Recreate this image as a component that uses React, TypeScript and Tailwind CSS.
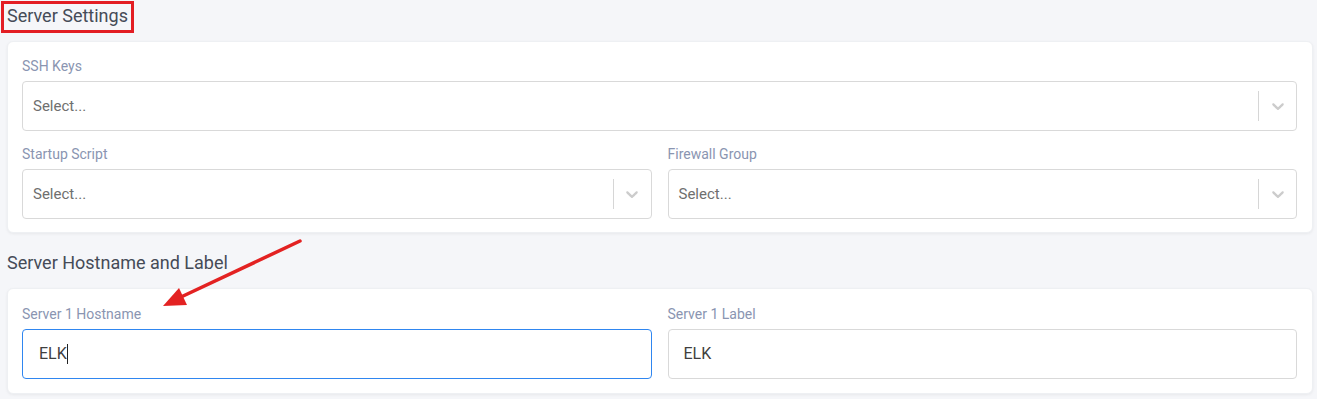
import React from 'react';

const Chevron = () => (
  <svg width="20" height="20" viewBox="0 0 20 20" className="fill-[#cccccc]">
    <path d="M4.516 7.548c0.436-0.446 1.043-0.481 1.576 0l3.908 3.747 3.908-3.747c0.533-0.481 1.141-0.446 1.574 0 0.436 0.445 0.408 1.197 0 1.615-0.406 0.418-4.695 4.502-4.695 4.502-0.217 0.223-0.502 0.335-0.787 0.335s-0.57-0.112-0.789-0.335c0 0-4.287-4.084-4.695-4.502s-0.436-1.17 0-1.615z" />
  </svg>
);

const Field = ({ label, children }: { label: string; children: React.ReactNode }) => (
  <div>
    <div className="text-[14px] leading-[16px] text-[#8a95b1] mb-[7px]">{label}</div>
    {children}
  </div>
);

const SelectBox = () => (
  <div className="h-[50px] flex items-center border border-[#d9d9d9] rounded-[4px] bg-white">
    <div className="flex-1 pl-[10px] text-[15px] text-[#6f6f6f]">Select...</div>
    <div className="w-px h-[30px] bg-[#d6d6d6]" />
    <div className="w-[37px] flex items-center justify-center">
      <Chevron />
    </div>
  </div>
);

const TextBox = ({ value, focused }: { value: string; focused?: boolean }) => (
  <div
    className={`h-[50px] flex items-center rounded-[4px] bg-white px-[15px] text-[16px] text-[#3f3f3f] ${
      focused ? 'border border-[#2f86f0]' : 'border border-[#d9d9d9]'
    }`}
  >
    <span className={focused ? 'pl-[1px]' : ''}>{value}</span>
    {focused && <span className="w-px h-[20px] bg-[#222]" />}
  </div>
);

const Card = ({ children, className = '' }: { children: React.ReactNode; className?: string }) => (
  <div
    className={`bg-white rounded-[6px] border border-[#eef0f3] shadow-[0_1px_3px_rgba(0,0,0,0.06)] pl-[14px] pr-[15px] ${className}`}
  >
    {children}
  </div>
);

export default function App() {
  return (
    <div
      className="relative w-[1317px] h-[399px] bg-[#f5f6f9] pl-[7px] pr-[4px] overflow-hidden"
      style={{ fontFamily: 'Roboto, "Liberation Sans", sans-serif' }}
    >
      <div className="h-[32px] leading-[32px] text-[18px] text-[#454b57] mb-[9px]">Server Settings</div>

      <Card className="pt-[16px] pb-[13px]">
        <Field label="SSH Keys">
          <SelectBox />
        </Field>
        <div className="grid grid-cols-2 gap-x-4 mt-[15px]">
          <Field label="Startup Script">
            <SelectBox />
          </Field>
          <Field label="Firewall Group">
            <SelectBox />
          </Field>
        </div>
      </Card>

      <div className="h-[32px] leading-[32px] text-[18px] text-[#454b57] mt-[14px] mb-[9px]">
        Server Hostname and Label
      </div>

      <Card className="pt-[17px] pb-[14px]">
        <div className="grid grid-cols-2 gap-x-4">
          <Field label="Server 1 Hostname">
            <TextBox value="ELK" focused />
          </Field>
          <Field label="Server 1 Label">
            <TextBox value="ELK" />
          </Field>
        </div>
      </Card>

      {/* annotation overlays */}
      <div className="absolute left-[1px] top-[1px] w-[133px] h-[32px] border-[3px] border-[#e31e24]" />
      <svg className="absolute left-0 top-0 pointer-events-none" width="1317" height="399">
        <line x1="300" y1="241" x2="181" y2="297" stroke="#e32222" strokeWidth="3.5" strokeLinecap="round" />
        <polygon points="163,306 187,305 179,288" fill="#e32222" />
      </svg>
    </div>
  );
}
